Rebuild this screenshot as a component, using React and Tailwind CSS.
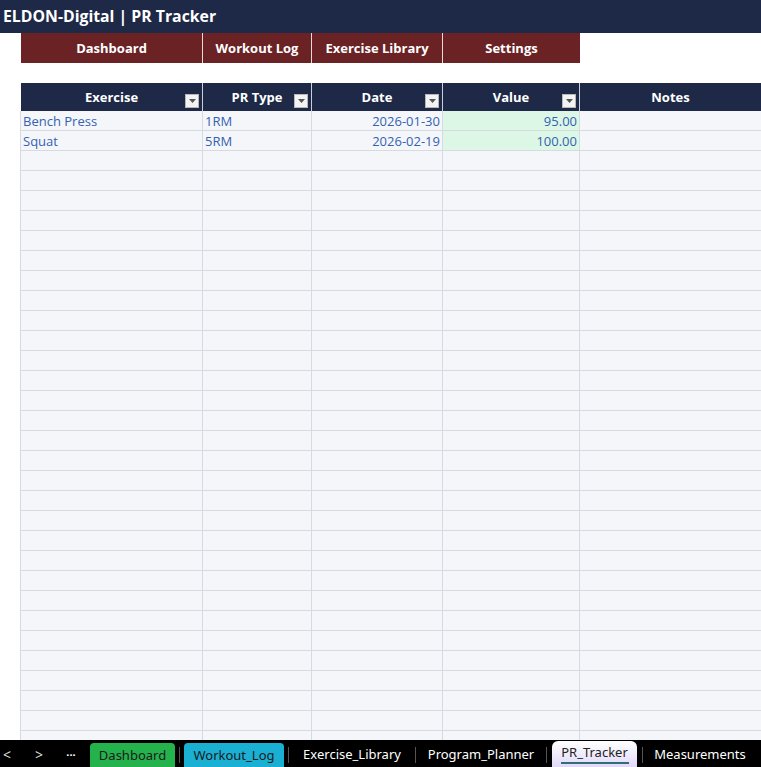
import React from "react";

const cols = "grid-cols-[21px_182px_109px_131px_137px_1fr]";

const rows = [
  { exercise: "Bench Press", type: "1RM", date: "2026-01-30", value: "95.00" },
  { exercise: "Squat", type: "5RM", date: "2026-02-19", value: "100.00" },
];

const FilterButton = () => (
  <span className="absolute right-[3px] bottom-[3px] w-[14px] h-[14px] bg-[#f3f3f3] border border-[#b8b8b8] flex items-center justify-center">
    <svg width="7" height="4" viewBox="0 0 7 4">
      <path d="M0 0 L7 0 L3.5 4 Z" fill="#555" />
    </svg>
  </span>
);

const HeaderCell = ({ label, filter, last }) => (
  <div
    className={`relative h-[28px] bg-[#1e2947] text-white font-bold text-[13px] flex items-center justify-center pt-[2px] ${
      last ? "" : "border-r border-[#c9ced8]"
    }`}
  >
    {label}
    {filter && <FilterButton />}
  </div>
);

const Sep = () => <div className="w-px h-[16px] bg-[#555] shrink-0 mt-[2px]" />;

const Tab = ({ label, w }) => (
  <div className={`${w} h-full flex items-center justify-center pt-[2px] text-[13px] shrink-0`}>{label}</div>
);

export default function App() {
  const blanks = Array.from({ length: 30 });

  return (
    <div className="w-[761px] h-[767px] overflow-hidden bg-white flex flex-col font-['Open_Sans',sans-serif]">
      <div className="h-[33px] shrink-0 bg-[#1e2947] flex items-center pl-[3px] pt-[1px] text-white font-bold text-[15.8px]">
        ELDON-Digital | PR Tracker
      </div>

      <div className={`grid ${cols} h-[30px] shrink-0`}>
        <div />
        {["Dashboard", "Workout Log", "Exercise Library", "Settings"].map((n, i) => (
          <div
            key={n}
            className={`bg-[#6a2225] text-white font-bold text-[13px] flex items-center justify-center pt-[2px] ${
              i < 3 ? "border-r border-[#e8d8d8]" : ""
            }`}
          >
            {n}
          </div>
        ))}
        <div />
      </div>

      <div className="h-[20px] shrink-0" />

      <div className="flex-1 overflow-hidden">
        <div className={`grid ${cols}`}>
          <div className="h-[28px]" />
          <HeaderCell label="Exercise" filter />
          <HeaderCell label="PR Type" filter />
          <HeaderCell label="Date" filter />
          <HeaderCell label="Value" filter />
          <HeaderCell label="Notes" last />
        </div>

        {rows.map((r) => (
          <div key={r.exercise} className={`grid ${cols} h-[20px] text-[13px] leading-[16px] text-[#3462b2]`}>
            <div className="border-r border-[#d6dae1]" />
            <div className="bg-[#f4f6fa] border-r border-b border-[#d6dae1] pl-[2px] flex items-end pb-[1px]">{r.exercise}</div>
            <div className="bg-[#f4f6fa] border-r border-b border-[#d6dae1] pl-[2px] flex items-end pb-[1px]">{r.type}</div>
            <div className="bg-[#f4f6fa] border-r border-b border-[#d6dae1] pr-[2px] flex items-end justify-end pb-[1px]">{r.date}</div>
            <div className="bg-[#dcf7e5] border-r border-b border-[#d6dae1] pr-[2px] flex items-end justify-end pb-[1px]">{r.value}</div>
            <div className="bg-[#f4f6fa] border-b border-[#d6dae1]" />
          </div>
        ))}

        {blanks.map((_, i) => (
          <div key={i} className={`grid ${cols} h-[20px]`}>
            <div className="border-r border-[#d6dae1]" />
            <div className="bg-[#f4f6fa] border-r border-b border-[#d6dae1]" />
            <div className="bg-[#f4f6fa] border-r border-b border-[#d6dae1]" />
            <div className="bg-[#f4f6fa] border-r border-b border-[#d6dae1]" />
            <div className="bg-[#f4f6fa] border-r border-b border-[#d6dae1]" />
            <div className="bg-[#f4f6fa] border-b border-[#d6dae1]" />
          </div>
        ))}
      </div>

      <div className="h-[27px] shrink-0 bg-black flex items-center text-white font-['Noto_Sans',sans-serif]">
        <div className="w-[90px] h-full flex items-center pt-[2px] shrink-0">
          <span className="w-[14px] text-center text-[14px] text-[#ddd]">&lt;</span>
          <span className="w-[18px]" />
          <span className="w-[14px] text-center text-[14px] text-[#ddd]">&gt;</span>
          <span className="w-[18px]" />
          <span className="w-[14px] text-center text-[11px] font-bold leading-none">···</span>
        </div>
        <div className="w-[85px] h-[24px] self-end bg-[#24b24d] rounded-t-[4px] flex items-center justify-center pt-[1px] text-[13px] text-[#1a1a1a] shrink-0">
          Dashboard
        </div>
        <div className="w-[4px] shrink-0" />
        <Sep />
        <div className="w-[4px] shrink-0" />
        <div className="w-[100px] h-[24px] self-end bg-[#19b0d3] rounded-t-[4px] flex items-center justify-center pt-[1px] text-[13px] text-[#1a1a1a] shrink-0">
          Workout_Log
        </div>
        <div className="w-[4px] shrink-0" />
        <Sep />
        <Tab label="Exercise_Library" w="w-[126px]" />
        <Sep />
        <Tab label="Program_Planner" w="w-[130px]" />
        <Sep />
        <div className="w-[5px] shrink-0" />
        <div className="w-[85px] h-full self-end pt-[1px] shrink-0">
          <div className="h-full bg-gradient-to-b from-[#ffffff] to-[#e2d9f8] rounded-t-[6px] flex flex-col items-center justify-center text-[13px] text-[#222]">
            <span className="leading-tight">PR_Tracker</span>
            <span className="w-[68px] h-[2px] bg-[#2d6f78] mt-[1px]" />
          </div>
        </div>
        <div className="w-[5px] shrink-0" />
        <Sep />
        <Tab label="Measurements" w="w-[114px]" />
      </div>
    </div>
  );
}
